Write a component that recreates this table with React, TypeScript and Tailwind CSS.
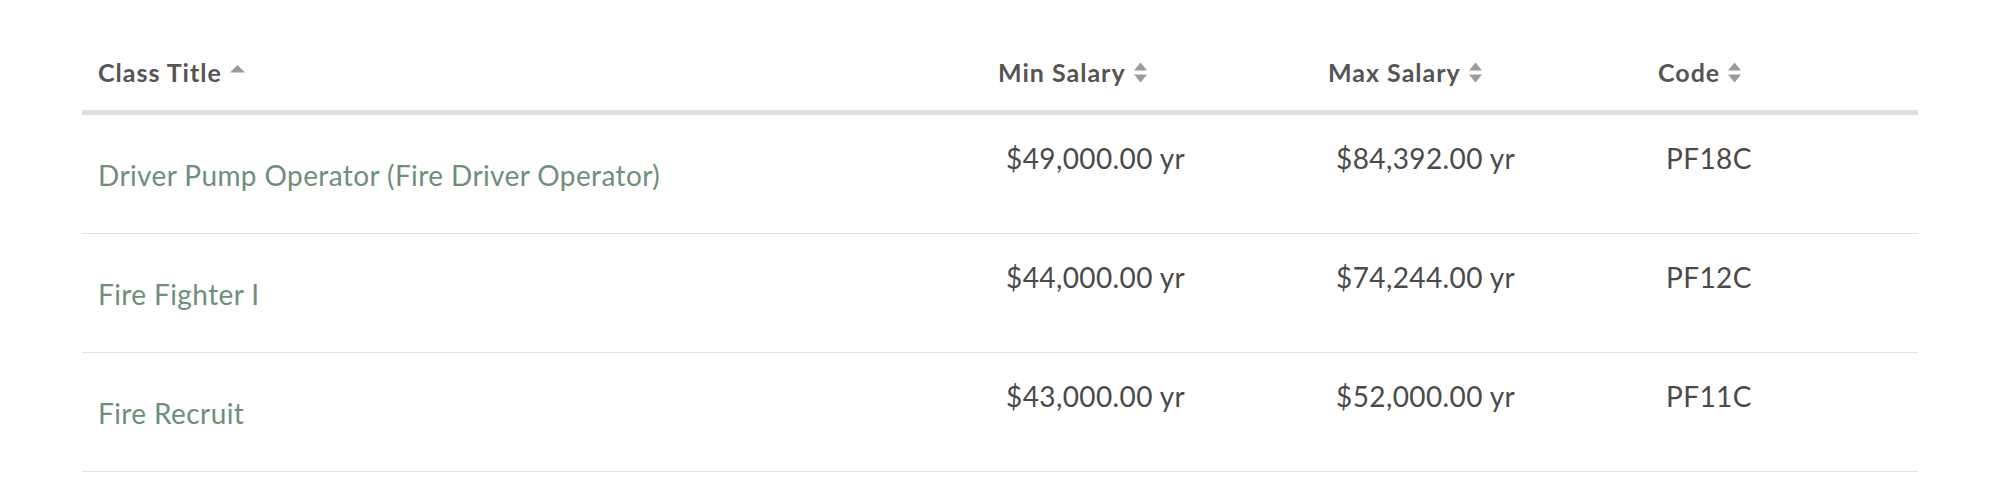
const rows = [
  { title: "Driver Pump Operator (Fire Driver Operator)", min: "$49,000.00 yr", max: "$84,392.00 yr", code: "PF18C" },
  { title: "Fire Fighter I", min: "$44,000.00 yr", max: "$74,244.00 yr", code: "PF12C" },
  { title: "Fire Recruit", min: "$43,000.00 yr", max: "$52,000.00 yr", code: "PF11C" },
];

const SortUp = () => (
  <svg width="15" height="8" viewBox="0 0 15 8" className="mb-[6px]">
    <path d="M0 7.5 L7.5 0 L15 7.5 Z" fill="#9b9b9b" />
  </svg>
);

const SortBoth = () => (
  <svg width="13" height="21" viewBox="0 0 13 21">
    <path d="M0 8.5 L6.5 0.5 L13 8.5 Z" fill="#9b9b9b" />
    <path d="M0 12.5 L13 12.5 L6.5 20.5 Z" fill="#9b9b9b" />
  </svg>
);

const HeaderCell = ({ label, both, className }: { label: string; both?: boolean; className: string }) => (
  <div className={`flex items-center gap-[8px] pl-4 ${className}`}>
    <span>{label}</span>
    {both ? <SortBoth /> : <SortUp />}
  </div>
);

export default function App() {
  return (
    <div className="w-full bg-white px-[82px] font-['Lato',sans-serif]">
      {/* Header */}
      <div className="flex pt-[57px] pb-[23px] border-b-[5px] border-[#dedede] text-[25px] leading-[30px] tracking-[1px] font-bold text-[#555555]">
        <HeaderCell label="Class Title" className="w-[900px]" />
        <HeaderCell label="Min Salary" both className="w-[330px]" />
        <HeaderCell label="Max Salary" both className="w-[330px]" />
        <HeaderCell label="Code" both className="flex-1" />
      </div>

      {/* Rows */}
      {rows.map((r, i) => (
        <div key={i} className="flex h-[119px] border-b border-[#e3e3e3] text-[28px] leading-[34px] tracking-[0.4px]">
          <div className="w-[900px] pl-4 pt-[43px] text-[#6f8e7b]">{r.title}</div>
          <div className="w-[330px] pl-6 pt-[26px] text-[#4a4a4a]">{r.min}</div>
          <div className="w-[330px] pl-6 pt-[26px] text-[#4a4a4a]">{r.max}</div>
          <div className="flex-1 pl-6 pt-[26px] text-[#4a4a4a]">{r.code}</div>
        </div>
      ))}
    </div>
  );
}
